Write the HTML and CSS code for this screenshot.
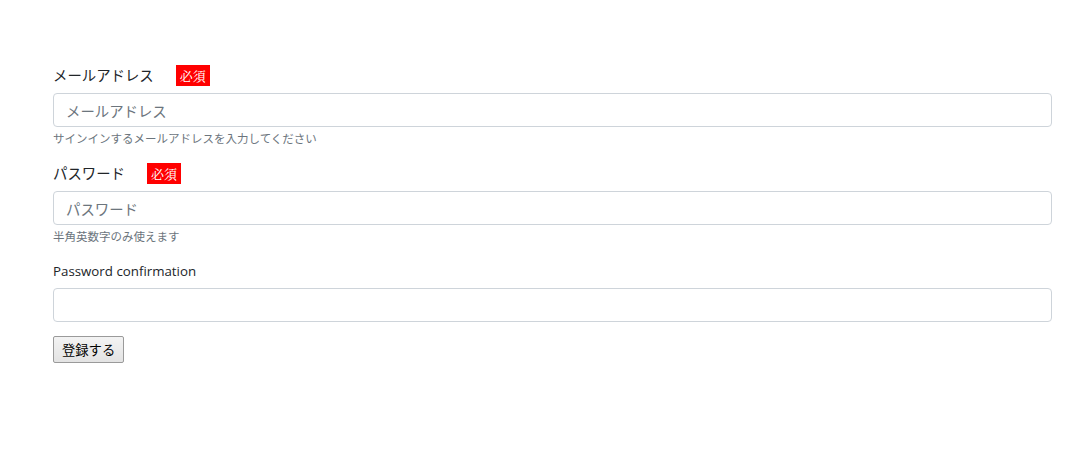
FILE: index.html
```html
<!DOCTYPE html>
<html lang="ja">
<head>
<meta charset="utf-8">
<title>登録</title>
<link rel="stylesheet" href="styles.css">
</head>
<body>
<main class="page">
  <form class="form">
    <div class="group">
      <label class="label">メールアドレス<span class="badge">必須</span></label>
      <input class="control" type="email" placeholder="メールアドレス">
      <small class="help">サインインするメールアドレスを入力してください</small>
    </div>
    <div class="group">
      <label class="label">パスワード<span class="badge">必須</span></label>
      <input class="control" type="password" placeholder="パスワード">
      <small class="help">半角英数字のみ使えます</small>
    </div>
    <div class="group group-confirm">
      <label class="label label-en">Password confirmation</label>
      <input class="control" type="password">
    </div>
    <button class="submit" type="button">登録する</button>
  </form>
</main>
</body>
</html>
```
FILE: styles.css
```css
* { box-sizing: border-box; }
html, body { margin: 0; padding: 0; background: #fff; }
body {
  font-family: "Noto Sans CJK JP", "Noto Sans", sans-serif;
  font-size: 14.4px;
  line-height: 1.5;
  color: #212529;
}
.page { padding: 63px 0 0 53px; }
.form { width: 999px; display: flex; flex-direction: column; align-items: flex-start; }
.group { width: 100%; display: flex; flex-direction: column; margin-bottom: 14px; }
.label {
  display: flex; align-items: center;
  height: 24px; margin-bottom: 6px;
  font-size: 14.4px; line-height: 24px;
}
.badge {
  display: inline-block;
  margin-left: 22px;
  height: 21px; line-height: 21px;
  padding: 0 4px;
  background: #ff0000; color: #fff;
  font-family: "Noto Serif CJK JP", "Liberation Serif", serif;
  font-size: 13px;
}
.label-en {
  font-family: "Open Sans", "Noto Sans", sans-serif;
  font-size: 13.3px;
  height: 20px; line-height: 20px; margin-bottom: 7px;
}
.group-confirm { margin-top: 2px; margin-bottom: 14px; }
.control {
  width: 100%; height: 34px;
  padding: 0 12px;
  border: 1px solid #ced4da; border-radius: 4px;
  font-family: inherit; font-size: 14.4px; color: #495057;
  background: #fff;
}
.control::placeholder { color: #6c757d; opacity: 1; }
.help {
  display: block; margin-top: 3px;
  font-size: 11.5px; line-height: 17px; color: #6c757d;
}
.submit {
  height: 27px; padding: 0 8px;
  font-family: "Noto Sans CJK JP", sans-serif; font-size: 13.3px;
  color: #000;
  background: linear-gradient(#f3f3f3, #e3e3e3);
  border: 1px solid #9a9a9a; border-radius: 2px;
}
```
